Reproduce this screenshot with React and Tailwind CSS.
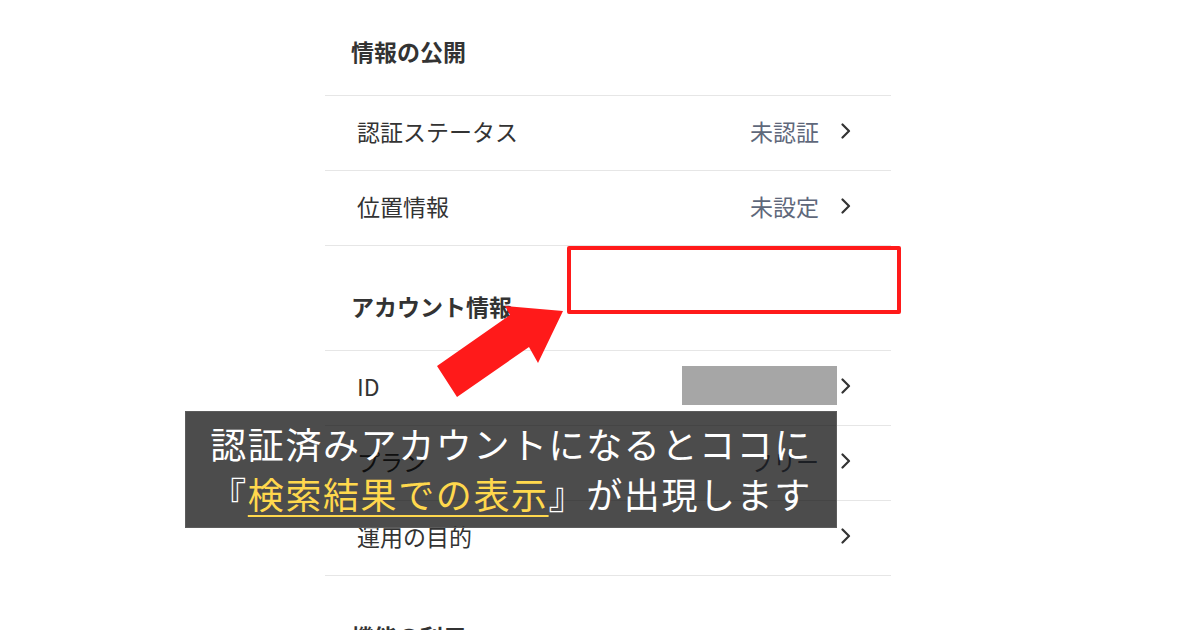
const FONT = { fontFamily: '"Noto Sans CJK JP", "Noto Sans", sans-serif' }

function Chevron() {
  return (
    <svg width="12" height="16" viewBox="0 0 12 16" className="shrink-0">
      <path d="M2.5 1.5 L9 8 L2.5 14.5" fill="none" stroke="#333" strokeWidth="2.2" strokeLinecap="round" strokeLinejoin="round" />
    </svg>
  )
}

function SectionHeader({ title, className }) {
  return (
    <div className={`flex items-center pl-[26px] text-[23px] font-bold text-[#333] ${className}`}>
      {title}
    </div>
  )
}

function Row({ label, value }) {
  return (
    <div className="flex h-[75px] items-center border-t border-[#e6e6e6] pb-[4px] pl-[32px] pr-[39px]">
      <span className="flex-1 text-[23px] text-[#333]">{label}</span>
      {value && <span className="mr-[21px] text-[23px] text-[#5f687b]">{value}</span>}
      <Chevron />
    </div>
  )
}

export default function App() {
  return (
    <div className="relative h-[630px] w-[1200px] overflow-hidden bg-white" style={FONT}>
      <div className="ml-[325px] w-[566px]">
        <SectionHeader title="情報の公開" className="h-[95px] pt-[8px]" />
        <Row label="認証ステータス" value="未認証" />
        <Row label="位置情報" value="未設定" />
        <div className="border-t border-[#e6e6e6]">
          <SectionHeader title="アカウント情報" className="h-[104px] pt-[16px]" />
        </div>
        <Row label="ID" />
        <Row label="プラン" value="フリー" />
        <Row label="運用の目的" />
        <div className="border-t border-[#e6e6e6]">
          <SectionHeader title="機能の利用" className="h-[104px] pt-[16px]" />
        </div>
      </div>

      {/* redaction */}
      <div className="absolute left-[682px] top-[366px] h-[39px] w-[155px] bg-[#a6a6a6]" />

      {/* highlight box */}
      <div className="absolute left-[567px] top-[246px] h-[68px] w-[334px] rounded-[2px] border-4 border-[#ff1a1a]" />

      {/* arrow */}
      <svg className="absolute left-0 top-0" width="1200" height="630" viewBox="0 0 1200 630">
        <polygon
          points="563,311 505,306 510,315 437,366 457,397 529,347 538,363"
          fill="#ff1a1a"
        />
      </svg>

      {/* caption */}
      <div className="absolute left-[185px] top-[411px] flex h-[117px] w-[652px] flex-col items-center justify-center border border-[#5c5c5c] bg-black/70 pb-[4px] text-[36px] leading-[50px] tracking-[1.6px] text-white">
        <p>認証済みアカウントになるとココに</p>
        <p>
          『<span className="text-[#ffd84d] underline decoration-2 underline-offset-[6px]">検索結果での表示</span>』が出現します
        </p>
      </div>
    </div>
  )
}
